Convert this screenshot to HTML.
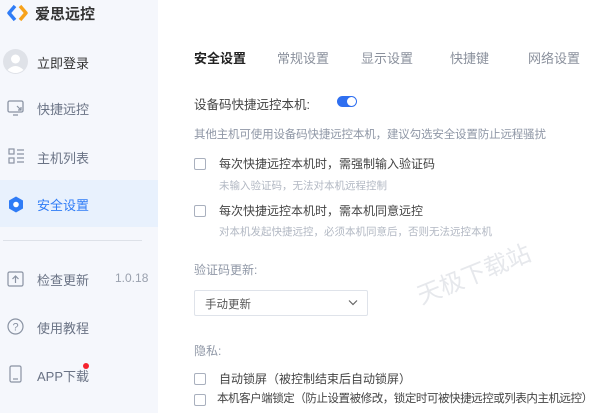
<!DOCTYPE html><html><head><meta charset="utf-8"><style>
*{margin:0;padding:0;box-sizing:border-box}
body{width:600px;height:413px;overflow:hidden;background:#fff;font-family:"Liberation Sans","Noto Sans CJK SC",sans-serif;position:relative}
.a{position:absolute;white-space:nowrap}
#sb{position:absolute;left:0;top:0;width:158px;height:413px;background:#f5f7fc}
.nav{font-size:13px;color:#6a7385}
.cb{position:absolute;width:12px;height:12px;border:1px solid #a9b0be;border-radius:2px;background:#fff}
</style></head><body>
<div id="sb">
<svg class="a" style="left:4px;top:3px" width="26" height="20" viewBox="0 0 26 20"><path d="M11 3 L5 10 L11 17" fill="none" stroke="#2f7cf6" stroke-width="3.5" stroke-linejoin="round"/><path d="M16 3 L22 10 L16 17" fill="none" stroke="#f7a21b" stroke-width="3.5" stroke-linejoin="round"/></svg>
<div class="a" style="left:35px;top:3px;font-size:15px;font-weight:bold;color:#333">爱思远控</div>
<svg class="a" style="left:3px;top:49px" width="25" height="25" viewBox="0 0 25 25"><circle cx="12.5" cy="12.5" r="12.5" fill="#dfe2e8"/><circle cx="12.5" cy="10" r="4.5" fill="#fff"/><path d="M4.5 21 Q12.5 13 20.5 21 Q12.5 27 4.5 21Z" fill="#fff"/></svg>
<div class="a" style="left:37px;top:53px;font-size:13px;color:#333">立即登录</div>
<svg class="a" style="left:7px;top:100px" width="17" height="16" viewBox="0 0 17 16"><rect x="1" y="1" width="15" height="11" rx="1.5" fill="none" stroke="#8a93a3" stroke-width="1.3"/><path d="M6 15h5M10 6l4 4M14 7v3h-3" stroke="#8a93a3" stroke-width="1.2" fill="none"/></svg>
<div class="a nav" style="left:37px;top:99px">快捷远控</div>
<svg class="a" style="left:8px;top:148px" width="17" height="16" viewBox="0 0 17 16"><rect x="1" y="1" width="5" height="5" fill="none" stroke="#8a93a3" stroke-width="1.2"/><rect x="1" y="10" width="5" height="5" fill="none" stroke="#8a93a3" stroke-width="1.2"/><path d="M9 2h7M9 6h7M9 10h7M9 14h7" stroke="#8a93a3" stroke-width="1.2"/></svg>
<div class="a nav" style="left:37px;top:148px">主机列表</div>
<div class="a" style="left:0;top:180px;width:158px;height:47px;background:#e8f1fd"></div>
<svg class="a" style="left:8px;top:196px" width="16" height="17" viewBox="0 0 16 17"><path d="M8 0.5 L15 4.5 V12.5 L8 16.5 L1 12.5 V4.5Z" fill="#2f7cf6"/><circle cx="8" cy="8.5" r="2.8" fill="#fff"/></svg>
<div class="a" style="left:37px;top:195px;font-size:13px;color:#2f7cf6">安全设置</div>
<div class="a" style="left:3px;top:240px;width:139px;height:1px;background:#dde1e8"></div>
<svg class="a" style="left:7px;top:271px" width="17" height="16" viewBox="0 0 17 16"><rect x="1" y="1" width="15" height="14" rx="1.5" fill="none" stroke="#8a93a3" stroke-width="1.2"/><path d="M8.5 12V5M5.5 8l3-3 3 3" stroke="#8a93a3" stroke-width="1.2" fill="none"/></svg>
<div class="a nav" style="left:37px;top:270px">检查更新</div>
<div class="a" style="left:115px;top:271px;font-size:12px;color:#9aa1ae">1.0.18</div>
<svg class="a" style="left:7px;top:318px" width="17" height="17" viewBox="0 0 17 17"><circle cx="8.5" cy="8.5" r="7.5" fill="none" stroke="#8a93a3" stroke-width="1.2"/><text x="8.5" y="12.5" font-size="11" text-anchor="middle" fill="#8a93a3" font-family="Liberation Sans">?</text></svg>
<div class="a nav" style="left:37px;top:318px">使用教程</div>
<svg class="a" style="left:9px;top:365px" width="13" height="18" viewBox="0 0 13 18"><rect x="1" y="1" width="11" height="16" rx="1.5" fill="none" stroke="#8a93a3" stroke-width="1.2"/><path d="M4 14h5" stroke="#8a93a3" stroke-width="1.2"/></svg>
<div class="a nav" style="left:37px;top:366px">APP下载</div>
<div class="a" style="left:83px;top:363px;width:6px;height:6px;border-radius:50%;background:#f5222d"></div>
</div>
<div class="a" style="left:194px;top:48px;font-size:13px;font-weight:bold;color:#222">安全设置</div>
<div class="a" style="left:277px;top:48px;font-size:13px;color:#8a909c">常规设置</div>
<div class="a" style="left:361px;top:48px;font-size:13px;color:#8a909c">显示设置</div>
<div class="a" style="left:450px;top:48px;font-size:13px;color:#8a909c">快捷键</div>
<div class="a" style="left:528px;top:48px;font-size:13px;color:#8a909c">网络设置</div>
<div class="a" style="left:194px;top:94px;font-size:12.5px;color:#444">设备码快捷远控本机:</div>
<div class="a" style="left:337px;top:96px;width:20px;height:11px;border-radius:6px;background:#2f6ff0"></div>
<div class="a" style="left:347px;top:97px;width:9px;height:9px;border-radius:50%;background:#fff"></div>
<div class="a" style="left:194px;top:126px;font-size:11.5px;color:#8f97a6;letter-spacing:-0.15px">其他主机可使用设备码快捷远控本机，建议勾选安全设置防止远程骚扰</div>
<div class="cb" style="left:194px;top:158px"></div>
<div class="a" style="left:219px;top:155px;font-size:12px;color:#444">每次快捷远控本机时，需强制输入验证码</div>
<div class="a" style="left:219px;top:178px;font-size:10.5px;color:#b2b8c3">未输入验证码，无法对本机远程控制</div>
<div class="cb" style="left:194px;top:205px"></div>
<div class="a" style="left:219px;top:202px;font-size:12px;color:#444">每次快捷远控本机时，需本机同意远控</div>
<div class="a" style="left:219px;top:224px;font-size:10.5px;color:#b2b8c3">对本机发起快捷远控，必须本机同意后，否则无法远控本机</div>
<div class="a" style="left:194px;top:261px;font-size:12px;color:#8f97a6">验证码更新:</div>
<div class="a" style="left:194px;top:290px;width:174px;height:26px;border:1px solid #dfe3ea;border-radius:2px"></div>
<div class="a" style="left:205px;top:296px;font-size:11.5px;color:#555">手动更新</div>
<svg class="a" style="left:348px;top:299px" width="10" height="7" viewBox="0 0 10 7"><path d="M1 1.5l4 4 4-4" fill="none" stroke="#666" stroke-width="1.2"/></svg>
<div class="a" style="left:424px;top:276px;font-size:24px;color:#e6e8ec;transform:rotate(-22deg);transform-origin:left bottom">天极下载站</div>
<div class="a" style="left:194px;top:342px;font-size:12px;color:#8f97a6">隐私:</div>
<div class="cb" style="left:194px;top:373px"></div>
<div class="a" style="left:219px;top:370px;font-size:12px;color:#444">自动锁屏（被控制结束后自动锁屏）</div>
<div class="cb" style="left:194px;top:394px"></div>
<div class="a" style="left:217px;top:390px;font-size:11.5px;color:#444;letter-spacing:-0.45px">本机客户端锁定（防止设置被修改，锁定时可被快捷远控或列表内主机远控）</div>
</body></html>
